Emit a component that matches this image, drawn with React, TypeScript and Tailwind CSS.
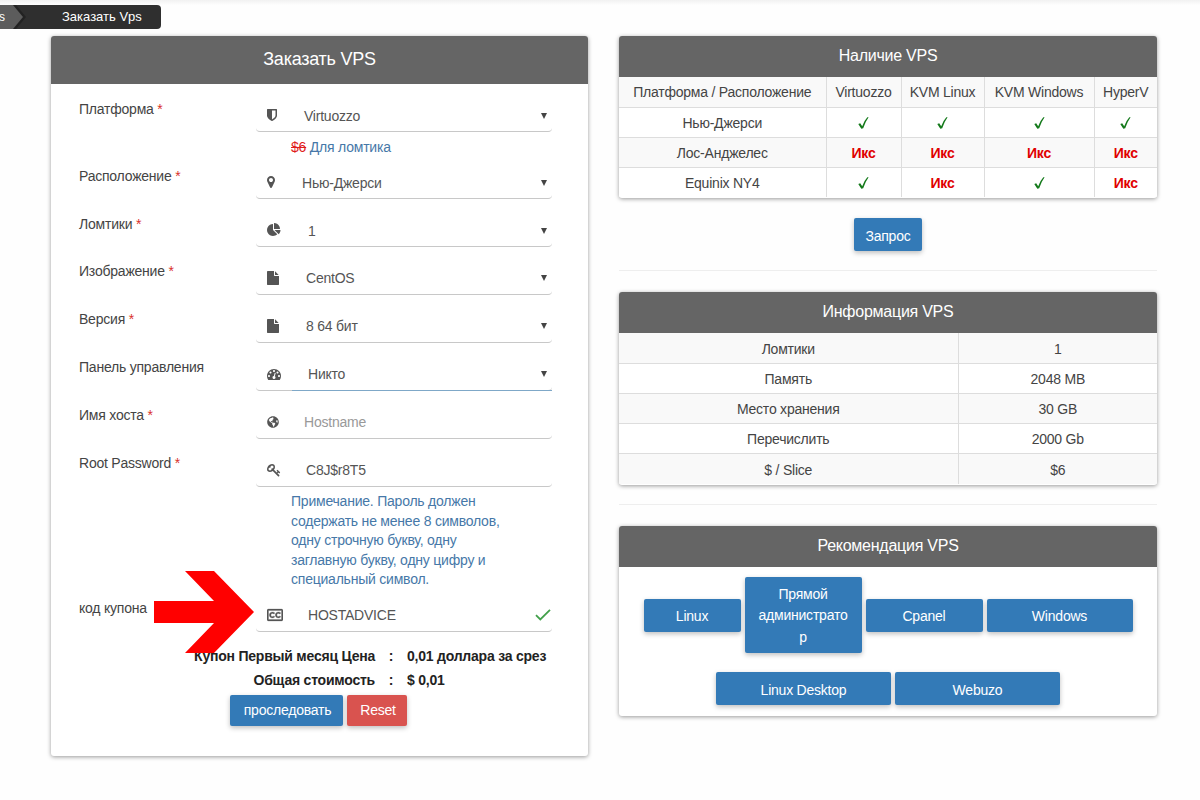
import type { ReactNode } from 'react';
import { FaGlobeAmericas, FaRegClosedCaptioning } from 'react-icons/fa';

const paths = {
  shield:
    'M1344 960v-640h-448v1137q119-63 213-137 235-184 235-360zm192-768v768q0 86-33.5 170.5t-83 150-118 127.5-126.5 103-121 77.5-89.5 49.5-42.5 20q-12 6-26 6t-26-6q-16-7-42.5-20t-89.5-49.5-121-77.5-126.5-103-118-127.5-83-150-33.5-170.5v-768q0-26 19-45t45-19h1152q26 0 45 19t19 45z',
  marker:
    'M1152 640q0-106-75-181t-181-75-181 75-75 181 75 181 181 75 181-75 75-181zm256 0q0 109-33 179l-364 774q-16 33-47.5 52t-67.5 19-67.5-19-46.5-52l-365-774q-33-70-33-179 0-212 150-362t362-150 362 150 150 362z',
  pie: 'M768 890l546 546q-106 108-247.5 168t-298.5 60q-209 0-385.5-103t-279.5-279.5-103-385.5 103-385.5 279.5-279.5 385.5-103v762zm187 6h773q0 157-60 298.5t-168 247.5zm709-128h-768v-768q209 0 385.5 103t279.5 279.5 103 385.5z',
  file: 'M1152 512v-472q22 14 36 28l408 408q14 14 28 36h-472zm-128 32q0 40 28 68t68 28h544v1056q0 40-28 68t-68 28h-1344q-40 0-68-28t-28-68v-1600q0-40 28-68t68-28h800v544z',
  gauge:
    'M384 1152q0-53-37.5-90.5t-90.5-37.5-90.5 37.5-37.5 90.5 37.5 90.5 90.5 37.5 90.5-37.5 37.5-90.5zm192-448q0-53-37.5-90.5t-90.5-37.5-90.5 37.5-37.5 90.5 37.5 90.5 90.5 37.5 90.5-37.5 37.5-90.5zm428 481l101-382q6-26-7.5-48.5t-38.5-29.5-48 6.5-30 39.5l-101 382q-60 5-107 43.5t-63 98.5q-20 77 20 146t117 89 146-20 89-117q16-60-6-117t-72-91zm660-33q0-53-37.5-90.5t-90.5-37.5-90.5 37.5-37.5 90.5 37.5 90.5 90.5 37.5 90.5-37.5 37.5-90.5zm-640-640q0-53-37.5-90.5t-90.5-37.5-90.5 37.5-37.5 90.5 37.5 90.5 90.5 37.5 90.5-37.5 37.5-90.5zm448 192q0-53-37.5-90.5t-90.5-37.5-90.5 37.5-37.5 90.5 37.5 90.5 90.5 37.5 90.5-37.5 37.5-90.5zm320 448q0 261-141 483-19 29-54 29h-1402q-35 0-54-29-141-221-141-483 0-182 71-348t191-286 286-191 348-71 348 71 286 191 191 286 71 348z',
  key: 'M832 512q0-80-56-136t-136-56-136 56-56 136q0 42 19 83-41-19-83-19-80 0-136 56t-56 136 56 136 136 56 136-56 56-136q0-42-19-83 41 19 83 19 80 0 136-56t56-136zm851 704q0 17-49 66t-66 49q-9 0-28.5-16t-36.5-33-38.5-40-24.5-26l-96 96 220 220q28 28 28 68 0 42-39 81t-81 39q-40 0-68-28l-671-671q-176 131-365 131-163 0-265.5-102.5t-102.5-265.5q0-160 95-313t248-248 313-95q163 0 265.5 102.5t102.5 265.5q0 189-131 365l355 355 96-96q-3-3-26-24.5t-40-38.5-33-36.5-16-28.5q0-17 49-66t66-49q13 0 23 10 6 6 46 44.5t82 79.5 86.5 86 73 78 28.5 41z',
};

function Icon({ name, viewBox, className }: { name: keyof typeof paths; viewBox: string; className: string }) {
  return (
    <svg viewBox={viewBox} className={className} fill="currentColor">
      <path d={paths[name]} />
    </svg>
  );
}

interface FieldProps {
  label: string;
  required?: boolean;
  icon: ReactNode;
  value: string;
  pad: string;
  height: string;
  labelTop?: string;
  select?: boolean;
  active?: boolean;
  placeholder?: boolean;
  valid?: boolean;
  children?: ReactNode;
}

function Field({
  label,
  required,
  icon,
  value,
  pad,
  height,
  labelTop = '-mt-px',
  select,
  active,
  placeholder,
  valid,
  children,
}: FieldProps) {
  return (
    <div className={`flex ${height}`}>
      <div className={`w-[177px] leading-5 ${labelTop}`}>
        {label}
        {required && <span className="text-[#d9302c]"> *</span>}
      </div>
      <div className="w-[296px]">
        <div className="flex h-[33px] rounded-b border-b border-[#c8c8c8] text-[#555]">
          <div className="flex w-9 items-center pl-[11px]">{icon}</div>
          <div className={`-mb-px flex grow items-center justify-between border-b ${pad} ${active ? 'border-[#7fa8c8]' : 'border-transparent'}`}>
            <span className={placeholder ? 'text-[#999]' : ''}>{value}</span>
            {select && (
              <svg viewBox="0 0 6 6" className="mr-[5px] h-1.5 w-1.5" fill="#444">
                <path d="M0 0h6L3 6z" />
              </svg>
            )}
            {valid && (
              <svg viewBox="0 0 16 12" className="mr-px h-3 w-4" fill="none" stroke="#43a04b" strokeWidth="1.8">
                <path d="M1 6.2l4.3 4.3L15 .9" />
              </svg>
            )}
          </div>
        </div>
        {children}
      </div>
    </div>
  );
}

function Card({ title, className = '', children }: { title: string; className?: string; children: ReactNode }) {
  return (
    <section className={`overflow-hidden rounded-[3px] bg-white shadow-[0_1px_4px_rgba(0,0,0,0.4)] ${className}`}>
      <h2 className="flex h-[41px] items-center justify-center bg-[#656565] pb-[2px] text-base tracking-[-0.25px] text-white">{title}</h2>
      {children}
    </section>
  );
}

function Button({ className = '', children }: { className?: string; children: ReactNode }) {
  return (
    <button className={`rounded-[2px] text-white shadow-[0_2px_5px_rgba(0,0,0,0.25)] ${className}`}>
      {children}
    </button>
  );
}

function Check() {
  return (
    <svg viewBox="0 0 11 12" className="mx-auto h-3 w-[11px]" fill="#157a1c">
      <path d="M.3 7.100l1.900-.800 2 2.900Q6 4 9.300.300l1.300-.1Q7.200 4.900 5.200 11.200l-1.900.500z" />
    </svg>
  );
}

const availability = [
  { place: 'Нью-Джерси', cells: [true, true, true, true] },
  { place: 'Лос-Анджелес', cells: [false, false, false, false] },
  { place: 'Equinix NY4', cells: [true, false, true, false] },
];

const info = [
  ['Ломтики', '1'],
  ['Память', '2048 MB'],
  ['Место хранения', '30 GB'],
  ['Перечислить', '2000 Gb'],
  ['$ / Slice', '$6'],
];

export default function App() {
  return (
    <div className="h-[800px] w-[1200px] overflow-hidden bg-[#fefefe] font-['Liberation_Sans',Arial,sans-serif] text-sm leading-5 tracking-[-0.22px] text-[#444]">
      <div className="h-[5px] bg-gradient-to-b from-[#f1f1f1] to-[#fefefe]" />
      <nav className="flex h-6 w-[161px] overflow-hidden rounded-r bg-[#2f2f2f] text-[13px] tracking-normal text-white">
        <svg viewBox="0 0 28 24" className="h-6 w-7 shrink-0">
          <path d="M0 0h16l10 12-10 12H0z" fill="#222" />
          <path d="M0 0h13l10 12-10 12H0z" fill="#5c5c5c" />
          <text x="-1" y="16" fontSize="12" fill="#fff">s</text>
        </svg>
        <span className="pl-[34px] leading-6">Заказать Vps</span>
      </nav>
      <main className="flex gap-[31px] pl-[51px] pt-[7px]">
        <section className="h-[720px] w-[537px] shrink-0 overflow-hidden rounded-[3px] bg-white shadow-[0_1px_4px_rgba(0,0,0,0.4)]">
          <h1 className="flex h-12 items-center justify-center bg-[#656565] pb-[2px] text-lg tracking-[-0.25px] text-white">Заказать VPS</h1>
          <div className="relative pl-[28px] pt-[15px]">
            <Field label="Платформа" required select height="h-[67px]" labelTop="mt-0" pad="pt-px pl-[12px]" value="Virtuozzo"
              icon={<Icon name="shield" viewBox="256 0 1280 1792" className="h-[14px] w-[10px]" />}>
              <p className="pl-[35px] pt-[5px] leading-5 text-[#4678a8]">
                <span className="text-[#e01b1b] line-through">$6</span> Для ломтика
              </p>
            </Field>
            <Field label="Расположение" required select height="h-12" labelTop="mt-0" pad="pt-px pl-[10px]" value="Нью-Джерси"
              icon={<Icon name="marker" viewBox="384 0 1024 1792" className="h-[14px] w-2" />} />
            <Field label="Ломтики" required select height="h-12" labelTop="mt-0" pad="pt-px pl-[16px]" value="1"
              icon={<Icon name="pie" viewBox="0 0 1792 1792" className="size-[14px]" />} />
            <Field label="Изображение" required select height="h-12" pad="pl-[14px]" value="CentOS"
              icon={<Icon name="file" viewBox="128 0 1536 1792" className="h-[14px] w-3" />} />
            <Field label="Версия" required select height="h-12" pad="pl-[14px]" value="8 64 бит"
              icon={<Icon name="file" viewBox="128 0 1536 1792" className="h-[14px] w-3" />} />
            <Field label="Панель управления" select active height="h-12" pad="pl-[16px]" value="Никто"
              icon={<Icon name="gauge" viewBox="0 0 1792 1792" className="size-[14px]" />} />
            <Field label="Имя хоста" required placeholder height="h-12" pad="pl-[12px]" value="Hostname"
              icon={<FaGlobeAmericas className="size-3" />} />
            <Field label="Root Password" required height="h-[145px]" pad="pl-[14px]" value="C8J$r8T5"
              icon={<Icon name="key" viewBox="0 0 1792 1792" className="size-[14px]" />}>
              <p className="pl-[35px] pt-[5px] leading-[19.5px] text-[#4678a8]">
                Примечание. Пароль должен<br />
                содержать не менее 8 символов,<br />
                одну строчную букву, одну<br />
                заглавную букву, одну цифру и<br />
                специальный символ.
              </p>
            </Field>
            <Field label="код купона" valid height="h-[45px]" pad="pl-[16px]" value="HOSTADVICE"
              icon={<FaRegClosedCaptioning className="size-4" stroke="currentColor" strokeWidth="8" />} />
            <div className="grid grid-cols-[296px_32px_1fr] font-bold leading-6 text-[#222]">
              <span className="text-right">Купон Первый месяц Цена</span>
              <span className="text-center">:</span>
              <span>0,01 доллара за срез</span>
              <span className="text-right">Общая стоимость</span>
              <span className="text-center">:</span>
              <span>$ 0,01</span>
            </div>
            <div className="flex gap-1 pl-[151px] pt-[3px]">
              <Button className="h-[31px] w-[113px] bg-[#337ab7] pb-px pl-[2px]">проследовать</Button>
              <Button className="h-[31px] w-[60px] bg-[#d9534f] pb-px pl-[2px]">Reset</Button>
            </div>
            <svg viewBox="0 0 100 82" className="absolute left-[103px] top-[487px] h-[82px] w-[100px]" fill="#f00">
              <path d="M0 30h60L31 0h29l40 41-40 41H31l29-30H0z" />
            </svg>
          </div>
        </section>

        <div className="w-[538px] shrink-0">
          <Card title="Наличие VPS" className="h-[162px]">
            <table className="w-full table-fixed border-collapse text-center">
              <colgroup>
                <col className="w-[207px]" />
                <col className="w-[75px]" />
                <col className="w-[83px]" />
                <col className="w-[110px]" />
                <col className="w-[63px]" />
              </colgroup>
              <tbody>
                <tr className="h-[30px] bg-[#f9f9f9]">
                  <td>Платформа / Расположение</td>
                  {['Virtuozzo', 'KVM Linux', 'KVM Windows', 'HyperV'].map((name) => (
                    <td key={name} className="border-l border-[#ddd]">{name}</td>
                  ))}
                </tr>
                {availability.map(({ place, cells }) => (
                  <tr key={place} className="h-[30px] border-t border-[#ddd] odd:bg-[#f9f9f9] even:bg-white">
                    <td className="pt-[2px]">{place}</td>
                    {cells.map((ok, i) => (
                      <td key={i} className="border-l border-[#ddd] pt-[2px] font-bold text-[#e00000]">
                        {ok ? <Check /> : 'Икс'}
                      </td>
                    ))}
                  </tr>
                ))}
              </tbody>
            </table>
          </Card>
          <div className="flex h-[73px] justify-center border-b border-[#eee] pt-5">
            <Button className="h-[33px] w-[68px] bg-[#337ab7] pt-[2px]">Запрос</Button>
          </div>
          <Card title="Информация VPS" className="mt-[21px] h-[193px]">
            <table className="w-full table-fixed border-collapse text-center">
              <colgroup>
                <col className="w-[339px]" />
                <col />
              </colgroup>
              <tbody>
                {info.map(([label, value]) => (
                  <tr key={label} className="h-[30px] border-t border-[#ddd] first:border-t-0 last:h-[31px] odd:bg-[#f9f9f9]">
                    <td className="pt-[2px]">{label}</td>
                    <td className="border-l border-[#ddd] pt-[2px]">{value}</td>
                  </tr>
                ))}
              </tbody>
            </table>
          </Card>
          <div className="h-5 border-b border-[#eee]" />
          <Card title="Рекомендация VPS" className="mt-[21px] h-[190px]">
            <div className="flex items-center justify-center gap-1 pt-[10px]">
              <Button className="h-[33px] w-[97px] bg-[#337ab7] pt-[2px]">Linux</Button>
              <Button className="h-[76px] w-[117px] bg-[#337ab7] pt-[2px] leading-[21.5px]">
                Прямой<br />администрато<br />р
              </Button>
              <Button className="h-[33px] w-[117px] bg-[#337ab7] pt-[2px]">Cpanel</Button>
              <Button className="h-[33px] w-[146px] bg-[#337ab7] pt-[2px]">Windows</Button>
            </div>
            <div className="flex justify-center gap-1 pt-[19px]">
              <Button className="h-[33px] w-[175px] bg-[#337ab7] pt-[2px]">Linux Desktop</Button>
              <Button className="h-[33px] w-[165px] bg-[#337ab7] pt-[2px]">Webuzo</Button>
            </div>
          </Card>
        </div>
      </main>
    </div>
  );
}
